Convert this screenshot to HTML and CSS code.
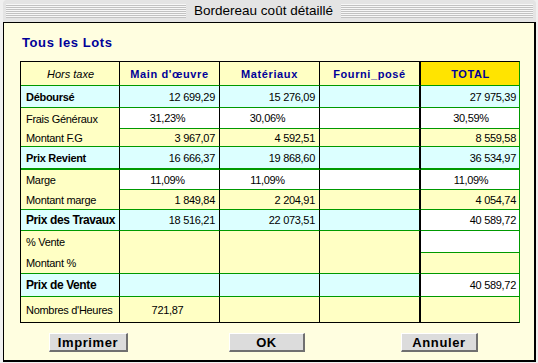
FILE: index.html
```html
<!DOCTYPE html>
<html lang="fr">
<head>
<meta charset="UTF-8" />
<title>Bordereau coût détaillé</title>
<link rel="stylesheet" href="styles.css">
</head>
<body>
  <div class="window">
    <div class="titlebar"><span class="title">Bordereau coût détaillé</span></div>
    <div class="frame">
      <h1 class="lot-title">Tous les Lots</h1>

      <div class="sheet">
        <!-- header -->
        <div class="c lbl hors">Hors taxe</div>
        <div class="c hd">Main d'œuvre</div>
        <div class="c hd">Matériaux</div>
        <div class="c hd sep">Fourni_posé</div>
        <div class="c hd tot gold">TOTAL</div>

        <!-- Déboursé -->
        <div class="c lbl cy b11">Déboursé</div>
        <div class="c num cy">12&nbsp;699,29</div>
        <div class="c num cy">15&nbsp;276,09</div>
        <div class="c cy sep"></div>
        <div class="c num cy tot">27&nbsp;975,39</div>

        <!-- Frais généraux -->
        <div class="c lbl nb">Frais Généraux</div>
        <div class="c pct wh">31,23%</div>
        <div class="c pct wh">30,06%</div>
        <div class="c wh sep"></div>
        <div class="c pct wh tot">30,59%</div>

        <div class="c lbl">Montant F.G</div>
        <div class="c num">3&nbsp;967,07</div>
        <div class="c num">4&nbsp;592,51</div>
        <div class="c sep"></div>
        <div class="c num tot">8&nbsp;559,58</div>

        <!-- Prix revient -->
        <div class="c lbl cy b11 thick">Prix Revient</div>
        <div class="c num cy thick">16&nbsp;666,37</div>
        <div class="c num cy thick">19&nbsp;868,60</div>
        <div class="c cy sep thick"></div>
        <div class="c num cy tot thick">36&nbsp;534,97</div>

        <!-- Marge -->
        <div class="c lbl nb">Marge</div>
        <div class="c pct wh">11,09%</div>
        <div class="c pct wh">11,09%</div>
        <div class="c wh sep"></div>
        <div class="c pct wh tot">11,09%</div>

        <div class="c lbl">Montant marge</div>
        <div class="c num">1&nbsp;849,84</div>
        <div class="c num">2&nbsp;204,91</div>
        <div class="c sep"></div>
        <div class="c num tot">4&nbsp;054,74</div>

        <!-- Prix des travaux -->
        <div class="c lbl cy b12">Prix des Travaux</div>
        <div class="c num cy">18&nbsp;516,21</div>
        <div class="c num cy">22&nbsp;073,51</div>
        <div class="c cy sep"></div>
        <div class="c num wh tot">40&nbsp;589,72</div>

        <!-- Vente -->
        <div class="c lbl nb">% Vente</div>
        <div class="c nb"></div>
        <div class="c nb"></div>
        <div class="c nb sep"></div>
        <div class="c wh tot"></div>

        <div class="c lbl">Montant %</div>
        <div class="c"></div>
        <div class="c"></div>
        <div class="c sep"></div>
        <div class="c tot"></div>

        <div class="c lbl cy b12">Prix de Vente</div>
        <div class="c cy"></div>
        <div class="c cy"></div>
        <div class="c cy sep"></div>
        <div class="c num wh tot">40&nbsp;589,72</div>

        <!-- heures -->
        <div class="c lbl nb">Nombres d'Heures</div>
        <div class="c pct nb">721,87</div>
        <div class="c nb"></div>
        <div class="c nb sep"></div>
        <div class="c nb tot"></div>
      </div>

      <div class="buttons">
        <button class="btn btn-print">Imprimer</button>
        <button class="btn btn-ok">OK</button>
        <button class="btn btn-cancel">Annuler</button>
      </div>
    </div>
  </div>
</body>
</html>
```

FILE: styles.css
```css
/* Base */
* {
  box-sizing: border-box;
}
body {
  margin: 0;
  background: #f0f0f0;
  font-family: "Liberation Sans", Arial, sans-serif;
  color: #000;
}

.window {
  width: 538px;
  height: 363px;
}

/* Title bar */
.titlebar {
  height: 22px;
  margin: 0 2px 0 3px;
  padding: 4px 3px 4px;
  display: flex;
  justify-content: center;
  align-items: center;
  background: repeating-linear-gradient(to bottom, #f7f7f7 0 1px, #c2c2c2 1px 2px) content-box, #e4e4e4;
  border-radius: 4px 4px 0 0;
}
.title {
  background: #e4e4e4;
  padding: 0 8px;
  margin-right: 12px;
  font-size: 13.5px;
  line-height: 22px;
  color: #000;
}

/* Window body */
.frame {
  margin-left: 3px;
  width: 533px;
  height: 340px;
  border: solid #000;
  border-width: 1px 2px 2px 1px;
  background: #fffee0;
  padding: 12px 0 0 16px;
}

.lot-title {
  margin: 0 0 11px 2px;
  font-size: 13px;
  line-height: 15px;
  font-weight: bold;
  letter-spacing: 0.6px;
  color: #000099;
}

/* Sheet */
.sheet {
  display: grid;
  grid-template-columns: 99px 100px 100px 101px 98px;
  grid-template-rows: 24px 22px 21px 18px 23px 20px 20px 21px 22px 21px 23px 25px;
  width: 500px;
  border: 1px solid #000;
  border-right-color: #009900;
}

.c {
  display: flex;
  align-items: center;
  padding: 0 4px;
  background: #ffffc4;
  border-right: 1px solid #000;
  border-bottom: 1px solid #009900;
  font-size: 11px;
  letter-spacing: -0.3px;
  white-space: nowrap;
}

.lbl {
  padding-left: 5px;
}
.num {
  justify-content: flex-end;
}
.pct {
  justify-content: center;
  padding-right: 8px;
}
.tot.pct {
  padding-right: 2px;
}

.cy {
  background: #dcffff;
}
.wh {
  background: #ffffff;
}
.gold {
  background: #ffe400;
}

.nb {
  border-bottom: none;
}
.thick {
  border-bottom-width: 2px;
}
.sep {
  border-right-width: 2px;
}
.tot {
  border-right: none;
  padding-right: 3px;
}

.hd {
  justify-content: center;
  font-weight: bold;
  color: #000099;
  letter-spacing: 0.6px;
}
.hors {
  justify-content: center;
  font-style: italic;
  letter-spacing: 0;
}

.b11 {
  font-weight: bold;
}
.b12 {
  font-weight: bold;
  font-size: 12px;
  letter-spacing: -0.4px;
}

/* Buttons */
.buttons {
  display: flex;
  margin-top: 10px;
  padding-left: 29px;
}
.btn {
  height: 19px;
  padding: 0;
  background: #dcdcdc;
  border: solid;
  border-width: 1px 2px 2px 1px;
  border-color: #fff #707070 #707070 #fff;
  border-radius: 0;
  font-family: "Liberation Sans", Arial, sans-serif;
  font-size: 13px;
  font-weight: bold;
  letter-spacing: 0.6px;
  color: #000;
  line-height: 15px;
}
.btn-print {
  width: 79px;
}
.btn-ok {
  width: 76px;
  margin-left: 101px;
}
.btn-cancel {
  width: 77px;
  margin-left: 96px;
}
```
